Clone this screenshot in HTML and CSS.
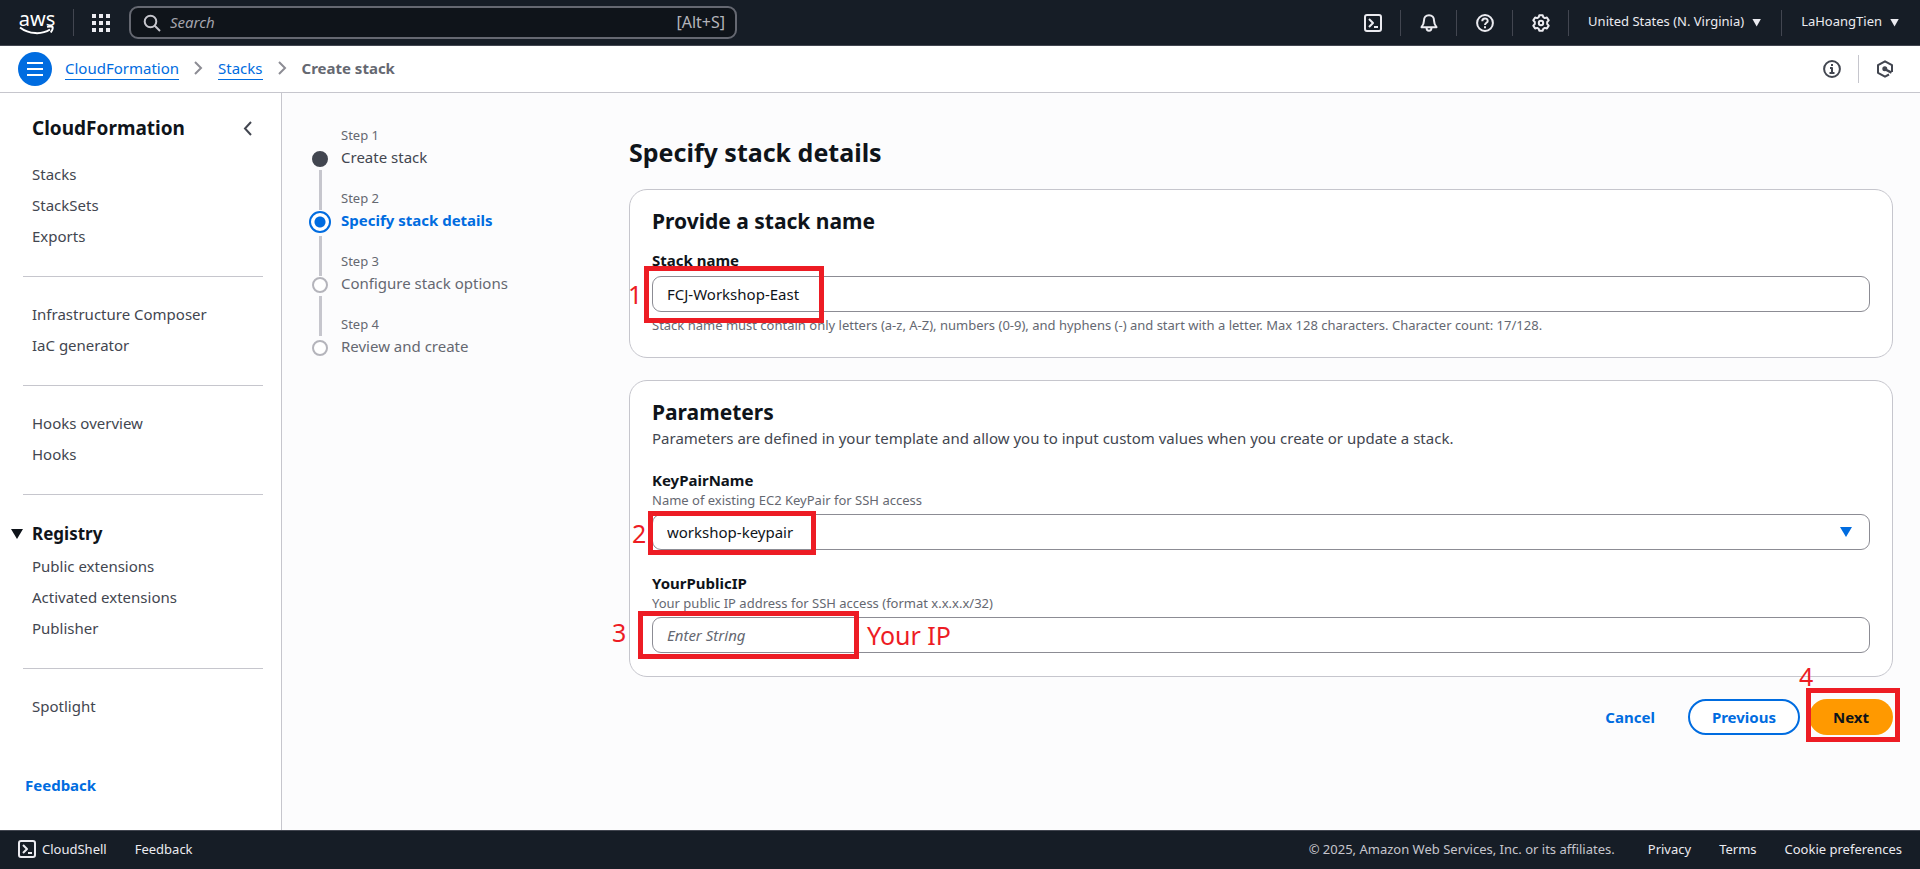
FILE: index.html
```html
<!DOCTYPE html>
<html lang="en">
<head>
<meta charset="utf-8">
<title>CloudFormation - Create stack</title>
<link rel="stylesheet" href="styles.css">
</head>
<body>
<header class="topbar">
  <a class="aws" href="#" aria-label="AWS home">
    <span class="aws-word">aws</span>
    <svg class="aws-smile" viewBox="0 0 36 9" aria-hidden="true"><path d="M1 1.500C10 8.500 23 8.800 31 3.500" /><path d="M28 .8c2-.4 4.500-.6 5.500.1.600 1.300-.4 3.800-1.700 5.600"/></svg>
  </a>
  <span class="divider"></span>
  <button class="icon-btn services" aria-label="Services">
    <svg viewBox="0 0 18 18" fill="currentColor"><path d="M0 0h4v4H0zM7 0h4v4H7zM14 0h4v4h-4zM0 7h4v4H0zM7 7h4v4H7zM14 7h4v4h-4zM0 14h4v4H0zM7 14h4v4H7zM14 14h4v4h-4z"/></svg>
  </button>
  <label class="search">
    <svg class="line" viewBox="0 0 18 18"><circle cx="7.500" cy="7.500" r="5.800"/><path d="M11.500 11.500l5.500 5.500"/></svg>
    <input type="search" placeholder="Search" aria-label="Search">
    <span>[Alt+S]</span>
  </label>
  <nav class="tools" aria-label="Account">
    <button class="icon-btn" aria-label="CloudShell"><svg class="line" viewBox="0 0 18 18"><rect x="1" y="1" width="16" height="16" rx="2"/><path d="M5 5l4 4-4 4M10 13h4"/></svg></button>
    <button class="icon-btn" aria-label="Notifications"><svg class="line" viewBox="0 0 18 18"><path d="M9 1.200c-3.200 0-5 2.300-5 5.200 0 3-.6 4.200-2.500 6.800h15c-1.900-2.600-2.500-3.800-2.500-6.800 0-2.900-1.800-5.200-5-5.200z"/><path d="M6.500 13.500c0 4.300 5 4.300 5 0"/></svg></button>
    <button class="icon-btn" aria-label="Help"><svg class="line" viewBox="0 0 18 18"><circle cx="9" cy="9" r="7.900"/><path d="M6.300 7.200c0-3.600 5.400-3.500 5.400-.3 0 2-2.700 1.700-2.700 4.100M9 12.200v2"/></svg></button>
    <button class="icon-btn" aria-label="Settings"><svg class="line" viewBox="0 0 18 18"><path d="M7.300 1.200h3.400l.6 2 1.500.9 2.100-.6 1.800 2.900L15.200 8v2l1.500 1.600-1.800 2.900-2.100-.6-1.500.9-.6 2H7.300l-.6-2-1.500-.9-2.100.6-1.800-2.900L2.800 10V8L1.300 6.400l1.800-2.900 2.100.6 1.500-.9z"/><circle cx="9" cy="9" r="2.200"/></svg></button>
    <button class="menu-btn"><span>United States (N. Virginia)</span><i class="caret"></i></button>
    <button class="menu-btn"><span>LaHoangTien</span><i class="caret"></i></button>
  </nav>
</header>

<div class="crumbbar">
  <button class="burger" aria-label="Menu"><svg viewBox="0 0 16 14"><path d="M0 1h16M0 7h16M0 13h16"/></svg></button>
  <nav class="crumbs" aria-label="Breadcrumbs">
    <a href="#">CloudFormation</a>
    <svg viewBox="0 0 9 14"><path d="M1 1l6 6-6 6"/></svg>
    <a href="#">Stacks</a>
    <svg viewBox="0 0 9 14"><path d="M1 1l6 6-6 6"/></svg>
    <b>Create stack</b>
  </nav>
  <div class="panels">
    <button class="icon-btn" aria-label="Info"><svg class="line" viewBox="0 0 18 18"><circle cx="9" cy="9" r="7.900"/><path d="M9 4v2M7 8h2v5M6.500 13h5"/></svg></button>
    <button class="icon-btn" aria-label="Diagnostics"><svg class="line" viewBox="0 0 18 18"><path d="M16 12V5.200L9 1.300 2 5.200v7.600l7 3.900 4-2.200"/><circle cx="8.800" cy="8.800" r="1.500" fill="currentColor"/><path stroke-width="2.500" d="M9.500 9.500l6 3.200"/></svg></button>
  </div>
</div>

<div class="body">
  <aside class="side">
    <div class="side-head"><h2>CloudFormation</h2><button class="collapse" aria-label="Close navigation"><svg viewBox="0 0 9 15"><path d="M8 1L2 7.500 8 14"/></svg></button></div>
    <ul><li><a href="#">Stacks</a></li><li><a href="#">StackSets</a></li><li><a href="#">Exports</a></li></ul>
    <hr>
    <ul><li><a href="#">Infrastructure Composer</a></li><li><a href="#">IaC generator</a></li></ul>
    <hr>
    <ul><li><a href="#">Hooks overview</a></li><li><a href="#">Hooks</a></li></ul>
    <hr>
    <button class="section"><i class="caret"></i>Registry</button>
    <ul><li><a href="#">Public extensions</a></li><li><a href="#">Activated extensions</a></li><li><a href="#">Publisher</a></li></ul>
    <hr>
    <ul><li><a href="#">Spotlight</a></li></ul>
    <a class="feedback" href="#">Feedback</a>
  </aside>

  <main class="main">
    <ol class="steps">
      <li class="done"><small>Step 1</small><i class="dot"></i><a href="#">Create stack</a></li>
      <li class="active"><small>Step 2</small><i class="dot"></i><span>Specify stack details</span></li>
      <li><small>Step 3</small><i class="dot"></i><span>Configure stack options</span></li>
      <li><small>Step 4</small><i class="dot"></i><span>Review and create</span></li>
    </ol>
    <form class="content">
      <h1>Specify stack details</h1>
      <section class="card">
        <h2>Provide a stack name</h2>
        <div class="field name-field">
          <label for="stack">Stack name</label>
          <div class="control">
            <input id="stack" type="text" value="FCJ-Workshop-East">
            <span class="mark mark-1"></span><span class="num num-1">1</span>
          </div>
          <p class="hint">Stack name must contain only letters (a-z, A-Z), numbers (0-9), and hyphens (-) and start with a letter. Max 128 characters. Character count: 17/128.</p>
        </div>
      </section>
      <section class="card">
        <h2>Parameters</h2>
        <p class="desc">Parameters are defined in your template and allow you to input custom values when you create or update a stack.</p>
        <div class="field">
          <label for="key">KeyPairName</label>
          <p class="hint">Name of existing EC2 KeyPair for SSH access</p>
          <div class="control">
            <select id="key"><option>workshop-keypair</option></select><i class="caret"></i>
            <span class="mark mark-2"></span><span class="num num-2">2</span>
          </div>
        </div>
        <div class="field">
          <label for="ip">YourPublicIP</label>
          <p class="hint">Your public IP address for SSH access (format x.x.x.x/32)</p>
          <div class="control">
            <input id="ip" type="text" placeholder="Enter String">
            <span class="mark mark-3"></span><span class="num num-3">3</span><span class="num num-ip">Your IP</span>
          </div>
        </div>
      </section>
      <div class="actions">
        <button type="button" class="btn link">Cancel</button>
        <button type="button" class="btn outline">Previous</button>
        <div class="control"><button type="button" class="btn primary">Next</button><span class="mark mark-4"></span><span class="num num-4">4</span></div>
      </div>
    </form>
  </main>
</div>

<footer class="footer">
  <a class="shell" href="#"><svg class="line" viewBox="0 0 18 18"><rect x="1" y="1" width="16" height="16" rx="2"/><path d="M5 5l4 4-4 4M10 13h4"/></svg>CloudShell</a>
  <a href="#">Feedback</a>
  <span class="copy">© 2025, Amazon Web Services, Inc. or its affiliates.</span>
  <a href="#">Privacy</a><a href="#">Terms</a><a href="#">Cookie preferences</a>
</footer>
</body>
</html>
```
FILE: styles.css
```css
* { box-sizing: border-box; }
body { margin: 0; min-height: 100vh; display: flex; flex-direction: column; font: 15px/22px "Noto Sans", "Open Sans", sans-serif; color: #0f141a; background: #fcfcfd; }
h1, h2, p, ul, ol { margin: 0; padding: 0; }
ul, ol { list-style: none; }
a { color: inherit; text-decoration: none; }
button, input, select { font: inherit; color: inherit; }
button { border: 0; background: none; padding: 0; }
svg { display: block; flex: none; }
.line { width: 18px; height: 18px; fill: none; stroke: currentColor; stroke-width: 2; stroke-linejoin: round; }
.caret { width: 12px; height: 10px; background: currentColor; clip-path: polygon(0 0, 100% 0, 50% 100%); }

.topbar { display: flex; align-items: center; height: 46px; padding: 0 21px 0 19px; background: #161d26; color: #ebebf0; border-bottom: 1px solid #424650; }
.aws { display: flex; flex-direction: column; align-items: center; width: 36px; color: #fff; }
.aws-word { font-size: 20px; line-height: 16px; height: 15px; }
.aws-smile { width: 36px; height: 9px; fill: none; stroke: #fff; stroke-width: 2; }
.divider { width: 1px; height: 27px; margin: 0 18px; background: #424650; }
.services svg { width: 18px; height: 18px; }
.search { display: flex; align-items: center; gap: 9px; width: 608px; height: 33px; margin-left: 19px; padding: 0 10px 0 12px; border: 2px solid #656871; border-radius: 9px; background: #0f141a; color: #b4b4bb; }
.search svg { color: #c6c6cd; }
.search input { flex: 1; min-width: 0; border: 0; padding: 0 0 2px; background: none; outline: 0; }
.search span { padding-bottom: 2px; font-size: 16px; }
.search input::placeholder { color: #a4a4ad; font-style: italic; opacity: 1; }
.tools { display: flex; align-items: center; margin-left: auto; }
.tools > * { display: flex; align-items: center; height: 26px; padding: 0 18px 0 19px; }
.tools > * + * { border-left: 1px solid #424650; }
.tools .menu-btn { gap: 8px; padding-right: 20px; font-size: 13px; }
.menu-btn span { padding-bottom: 3px; }
.menu-btn .caret { width: 9px; height: 8px; }
.tools > :last-child.menu-btn { padding-right: 0; }

.crumbbar { display: flex; align-items: center; height: 47px; padding: 0 16px 0 18px; background: #fff; border-bottom: 1px solid #c6c6cd; }
.burger { display: grid; place-items: center; width: 34px; height: 34px; border-radius: 50%; background: #006ce0; }
.burger svg { width: 16px; height: 14px; stroke: #fff; stroke-width: 2; }
.crumbs { display: flex; align-items: center; gap: 15px; margin-left: 13px; padding-bottom: 2px; color: #656871; }
.crumbs a { color: #006ce0; border-bottom: 1px solid; }
.crumbs svg { width: 9px; height: 14px; fill: none; stroke: #8c8c94; stroke-width: 2; }
.panels { display: flex; margin-left: auto; color: #424650; }
.panels > * { display: flex; align-items: center; height: 28px; padding: 0 17px 0 18px; }
.panels > * + * { border-left: 1px solid #c6c6cd; padding: 0 10px 0 17px; }

.body { flex: 1; display: flex; }
.side { width: 282px; flex: none; padding: 22px 18px 0 23px; background: #fff; border-right: 1px solid #c6c6cd; color: #424650; }
.side-head { display: flex; align-items: center; justify-content: space-between; padding: 0 11px 0 9px; margin-bottom: 22px; color: #0f141a; }
.side-head h2 { font-size: 19px; line-height: 26px; }
.collapse svg { width: 9px; height: 15px; fill: none; stroke: #424650; stroke-width: 2; }
.side ul { display: grid; gap: 9px; padding-left: 9px; }
.side hr { height: 1px; border: 0; margin: 29px 0 26px; background: #c6c6cd; }
.section { display: flex; align-items: center; gap: 9px; margin: 0 0 10px -12px; padding-top: 2px; font-size: 17px; font-weight: 700; color: #0f141a; }
.feedback { display: inline-block; margin: 57px 0 0 2px; color: #006ce0; font-weight: 700; }

.main { flex: 1; display: flex; min-width: 0; padding: 31px 27px 0; }
.steps { width: 320px; flex: none; color: #656871; }
.steps li { display: grid; grid-template-columns: 22px 1fr; column-gap: 10px; height: 63px; align-content: start; position: relative; }
.steps small { grid-column: 2; font-size: 13px; line-height: 22px; }
.steps a { color: #424650; }
.dot { width: 16px; height: 16px; margin: 5px auto 0; border: 2px solid #b4b4bb; border-radius: 50%; background: #fff; }
.steps li:not(:last-child)::after { content: ""; position: absolute; left: 10px; top: 46px; width: 3px; height: 40px; background: #c6c6cd; }
.steps li.active::after { top: 49px; }
.done .dot { background: #424650; border-color: #424650; }
.active { color: #006ce0; font-weight: 700; }
.active small { color: #656871; font-weight: 400; }
.active .dot { width: 22px; height: 22px; margin-top: 2px; background: radial-gradient(circle, #006ce0 5px, #fff 6px); border-color: #006ce0; }

.content { flex: 1; min-width: 0; }
h1 { font-size: 25px; line-height: 34px; margin: 11px 0 20px; }
.card { padding: 18px 22px 23px; border: 1px solid #c6c6cd; border-radius: 18px; background: #fff; margin-bottom: 22px; }
.card h2 { font-size: 21px; line-height: 26px; }
.desc { margin-top: 2px; color: #424650; }
.field { margin-top: 20px; }
.field + .field { margin-top: 22px; }
.name-field { margin-top: 15px; }
.field label { display: block; font-weight: 700; }
.hint { font-size: 13px; line-height: 18px; color: #656871; }
.control { position: relative; }
.control + .hint { margin-top: 4px; }
.field .control { margin-top: 5px; }
.control input, .control select { display: block; width: 100%; height: 36px; padding: 0 14px; border: 1px solid #8c8c94; border-radius: 9px; background: #fff; appearance: none; outline: 0; }
.control input::placeholder { color: #656871; font-style: italic; opacity: 1; }
.control .caret { position: absolute; right: 18px; top: 13px; color: #006ce0; }
.mark { position: absolute; border: 5px solid #ed1c24; pointer-events: none; }
.mark-1 { left: -8px; top: -10px; width: 180px; height: 57px; }
.mark-2 { left: -4px; top: -3px; width: 168px; height: 44px; }
.mark-3 { left: -14px; top: -6px; width: 221px; height: 48px; }
.mark-4 { right: -7px; top: -11px; width: 94px; height: 54px; }
.num { position: absolute; color: #ed1c24; font-size: 25px; line-height: 30px; white-space: nowrap; }
.num-1 { left: -24px; top: 3px; }
.num-2 { left: -20px; top: 4px; }
.num-3 { left: -40px; top: 0; }
.num-ip { left: 215px; top: 3px; }
.num-4 { left: -10px; top: -38px; }
.actions { display: flex; justify-content: flex-end; align-items: center; gap: 9px; padding-bottom: 30px; }
.btn { height: 36px; padding: 0 24px; border-radius: 18px; font-weight: 700; }
.link, .outline { color: #006ce0; }
.outline { padding: 0 22px; border: 2px solid #006ce0; background: #fff; }
.primary { background: #ff9900; }

.footer { display: flex; align-items: center; gap: 28px; height: 39px; padding: 0 18px 2px; border-top: 1px solid #424650; background: #161d26; color: #ebebf0; font-size: 13px; }
.shell { display: flex; align-items: center; gap: 6px; }
.copy { margin: 0 5px 0 auto; color: #c6c6cd; }
```
